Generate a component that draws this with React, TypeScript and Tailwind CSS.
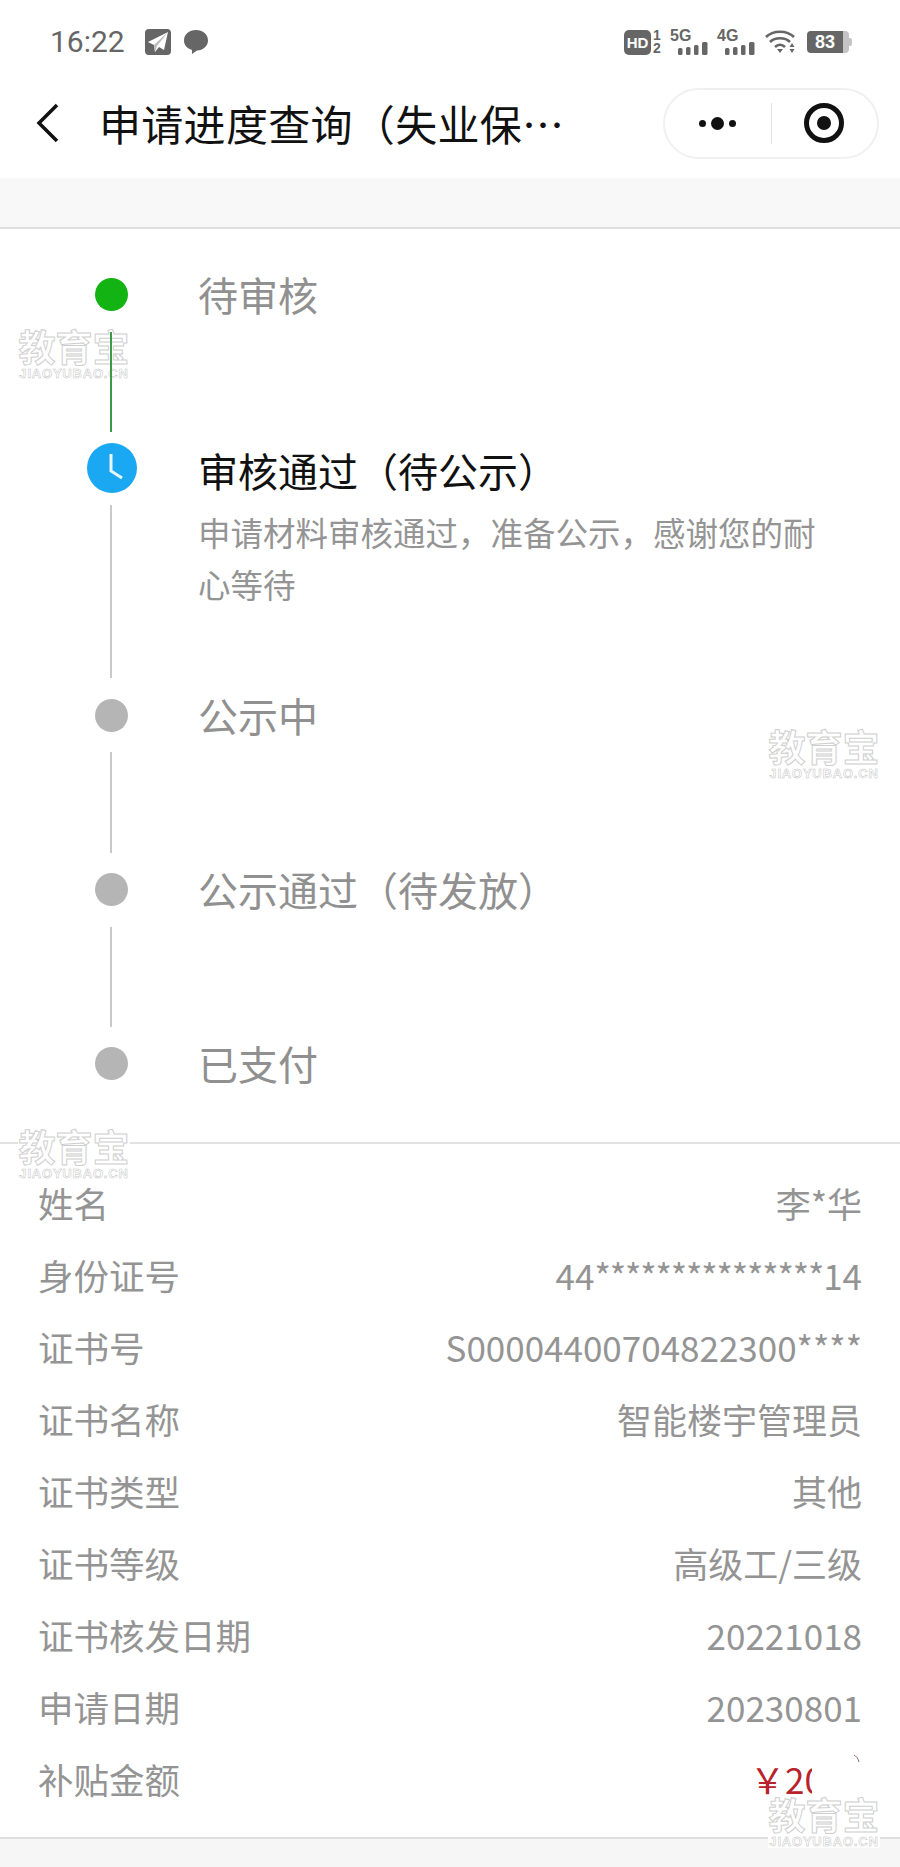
const font = "font-['Noto_Sans_CJK_SC','Noto_Sans',sans-serif]";

function Watermark({ className }: { className: string }) {
  return (
    <div className={`absolute w-[112px] h-[52px] bg-white flex flex-col items-center ${className}`}>
      <div className="text-[37px] leading-[37px] font-bold text-white [-webkit-text-stroke:1px_#cfcfcf] whitespace-nowrap">教育宝</div>
      <div className="mt-[2px] text-[13px] leading-[13px] tracking-[0.8px] font-['Liberation_Sans',sans-serif] font-bold text-white [-webkit-text-stroke:0.5px_#c4c4c4] whitespace-nowrap">JIAOYUBAO.CN</div>
    </div>
  );
}

function Bars({ className }: { className: string }) {
  return (
    <svg className={className} width="30" height="13" viewBox="0 0 30 13" fill="#666">
      <rect x="0" y="6" width="4.500" height="7" rx="1.500" />
      <rect x="8" y="5" width="4.500" height="8" rx="1.500" />
      <rect x="16" y="3" width="4.500" height="10" rx="1.500" />
      <rect x="24" y="0" width="5.500" height="13" rx="1.500" />
    </svg>
  );
}

function StatusBar() {
  return (
    <div className="h-[72px] flex items-center justify-between pl-[50px] pr-[48px] pt-[12px] bg-white">
      <div className="flex items-center">
        <span className="text-[30px] leading-none text-[#666] font-['Roboto',sans-serif] w-[95px]">16:22</span>
        <svg width="26" height="26" viewBox="0 0 26 26" className="mr-[12px]">
          <rect width="26" height="26" rx="4" fill="#666" />
          <path d="M23 3 L3 13 L9 16 L10 23 L14 18 L19 21 Z" fill="#fff" />
          <path d="M23 3 L9 16 L10 23 L12 17 Z" fill="#bbb" />
        </svg>
        <svg width="26" height="26" viewBox="0 0 26 26">
          <path d="M13 1 C20 1 25 5.500 25 11.500 C25 17 20 21.500 14 21.500 L9 25 L9 21 C4 19.500 1 16 1 11.500 C1 5.500 6 1 13 1 Z" fill="#666" />
        </svg>
      </div>
      <div className="flex items-center h-[26px] text-[#666] font-['Liberation_Sans',sans-serif] font-bold">
        <div className="w-[27px] h-[25px] rounded-[5px] bg-[#666] text-white text-[15px] leading-[25px] text-center">HD</div>
        <div className="w-[10px] ml-[1px] text-[14px] leading-[13px] text-center">1<br />2</div>
        <div className="relative w-[40px] h-[26px] ml-[8px]">
          <span className="absolute left-0 top-0 text-[16px] leading-[14px]">5G</span>
          <Bars className="absolute left-[8px] bottom-0" />
        </div>
        <div className="relative w-[40px] h-[26px] ml-[7px]">
          <span className="absolute left-0 top-0 text-[16px] leading-[14px]">4G</span>
          <Bars className="absolute left-[8px] bottom-0" />
        </div>
        <svg width="32" height="26" viewBox="0 0 32 26" fill="none" stroke="#666" strokeWidth="2.600" className="ml-[8px]">
          <path d="M1 8 C8 1 22 1 29 8" />
          <path d="M5 13 C10 8 20 8 25 13" />
          <path d="M10 18 C13 15 17 15 20 18" />
          <path d="M12 20 L15 24 L18 20 Z" fill="#666" stroke="none" />
          <path d="M27 14 L24.500 18 H29.500 Z M24.500 20 H29.500 L27 24 Z" fill="#666" stroke="none" />
        </svg>
        <div className="flex items-center ml-[10px]">
          <div className="w-[36px] h-[22px] rounded-l-[4px] bg-[#666] text-white text-[18px] leading-[22px] text-center">83</div>
          <div className="w-[6px] h-[22px] rounded-r-[4px] bg-[#c4c4c4]" />
          <div className="w-[3px] h-[8px] rounded-r-[2px] bg-[#c4c4c4]" />
        </div>
      </div>
    </div>
  );
}

function NavBar() {
  return (
    <div className="h-[106px] pb-[4px] flex items-center bg-white">
      <svg width="24" height="40" viewBox="0 0 24 40" fill="none" stroke="#111" strokeWidth="3.500" className="ml-[36px] mr-[39px]">
        <path d="M21 2 L3 20 L21 38" />
      </svg>
      <div className="text-[42px] tracking-[0.3px] leading-none text-[#111] w-[475px] whitespace-nowrap">
        申请进度查询<span className="font-['Noto_Sans_CJK_TC',sans-serif]">（</span>失业保…
      </div>
      <div className="ml-auto mr-[21px] w-[216px] h-[71px] rounded-full border-2 border-[#f0f0f0] flex items-center">
        <div className="flex-1 flex items-center justify-center gap-[5px]">
          <span className="w-[7px] h-[7px] rounded-full bg-[#111]" />
          <span className="w-[13px] h-[13px] rounded-full bg-[#111]" />
          <span className="w-[7px] h-[7px] rounded-full bg-[#111]" />
        </div>
        <div className="w-px h-[41px] bg-[#e5e5e5]" />
        <div className="flex-1 flex items-center justify-center">
          <div className="w-[40px] h-[40px] rounded-full border-[5px] border-[#111] flex items-center justify-center">
            <span className="w-[14px] h-[14px] rounded-full bg-[#111]" />
          </div>
        </div>
      </div>
    </div>
  );
}

function Dot({ color, size }: { color: string; size: string }) {
  return (
    <div className="h-[50px] flex items-center justify-center">
      <div className={`rounded-full ${color} ${size}`} />
    </div>
  );
}

function Step({ dot, line, title, dark, desc }: { dot: React.ReactNode; line?: React.ReactNode; title: string; dark?: boolean; desc?: boolean }) {
  return (
    <div className="flex pl-[86px]">
      <div className="w-[50px] mr-[62px] flex flex-col items-center">
        {dot}
        {line}
      </div>
      <div className="flex-1 pr-[60px]">
        <div className={`h-[50px] text-[40px] leading-[50px] whitespace-nowrap ${dark ? "mt-[2px] text-[#111]" : "mt-0 text-[#909090]"}`}>{title}</div>
        {desc && (
          <div className="mt-[11px] text-[32.500px] leading-[52px] text-[#949494] w-[630px]">申请材料审核通过，准备公示，感谢您的耐心等待</div>
        )}
      </div>
    </div>
  );
}

function Timeline() {
  return (
    <div className="pt-[40px] pb-[54px]">
      <Step
        title="待审核"
        dot={<Dot color="bg-[#14b314]" size="w-[33px] h-[33px]" />}
        line={<div className="relative z-10 w-[2px] h-[100px] mt-[13px] mb-[11px] bg-[#3f9a47]" />}
      />
      <Step
        title="审核通过（待公示）"
        dark
        desc
        dot={
          <div className="h-[50px] flex items-center justify-center">
            <svg width="50" height="50" viewBox="0 0 50 50" className="ml-[2px]">
              <circle cx="25" cy="25" r="25" fill="#1ba8f2" />
              <path d="M24 11 V28 L35 35" fill="none" stroke="#e8f6ff" strokeWidth="3" />
            </svg>
          </div>
        }
        line={<div className="w-[2px] h-[173px] mt-[12px] mb-[12px] bg-[#c9c9c9]" />}
      />
      <Step
        title="公示中"
        dot={<Dot color="bg-[#b5b5b5]" size="w-[33px] h-[33px]" />}
        line={<div className="w-[2px] h-[101px] mt-[12px] mb-[11px] bg-[#c9c9c9]" />}
      />
      <Step
        title="公示通过（待发放）"
        dot={<Dot color="bg-[#b5b5b5]" size="w-[33px] h-[33px]" />}
        line={<div className="w-[2px] h-[100px] mt-[13px] mb-[11px] bg-[#c9c9c9]" />}
      />
      <Step title="已支付" dot={<Dot color="bg-[#b5b5b5]" size="w-[33px] h-[33px]" />} />
    </div>
  );
}

const rows: [string, React.ReactNode][] = [
  ["姓名", "李*华"],
  ["身份证号", <>44<span className="tracking-[-1.1px]">***************</span>14</>],
  ["证书号", "S00004400704822300****"],
  ["证书名称", "智能楼宇管理员"],
  ["证书类型", "其他"],
  ["证书等级", "高级工/三级"],
  ["证书核发日期", "20221018"],
  ["申请日期", "20230801"],
];

function Info() {
  return (
    <div className="pt-[23px] pb-[22px] px-[38px] border-t-2 border-[#e2e2e2] text-[35.500px] text-[#949494]">
      {rows.map(([k, v]) => (
        <div key={k} className="h-[72px] flex items-center justify-between">
          <span>{k}</span>
          <span className="text-[35px]">{v}</span>
        </div>
      ))}
      <div className="h-[72px] flex items-center justify-between">
        <span>补贴金额</span>
        <div className="flex items-start">
          <span className="block w-[62px] overflow-hidden whitespace-nowrap text-[35px] text-[#b8232b]">￥200</span>
          <svg width="50" height="20" viewBox="0 0 50 20" fill="none" stroke="#8a6a6a" strokeWidth="1">
            <path d="M42 2 C44 3 46 5 47 9" />
          </svg>
        </div>
      </div>
    </div>
  );
}

export default function App() {
  return (
    <div className={`relative w-[900px] h-[1867px] overflow-hidden bg-white ${font}`}>
      <StatusBar />
      <NavBar />
      <div className="h-[51px] bg-[#f8f8f8] border-b-2 border-[#dedede]" />
      <Timeline />
      <Info />
      <div className="h-[30px] bg-[#f6f6f6] border-t-2 border-[#dedede]" />
      <Watermark className="left-[18px] top-[328px]" />
      <Watermark className="left-[768px] top-[728px]" />
      <Watermark className="left-[18px] top-[1128px]" />
      <Watermark className="left-[768px] top-[1796px]" />
    </div>
  );
}
